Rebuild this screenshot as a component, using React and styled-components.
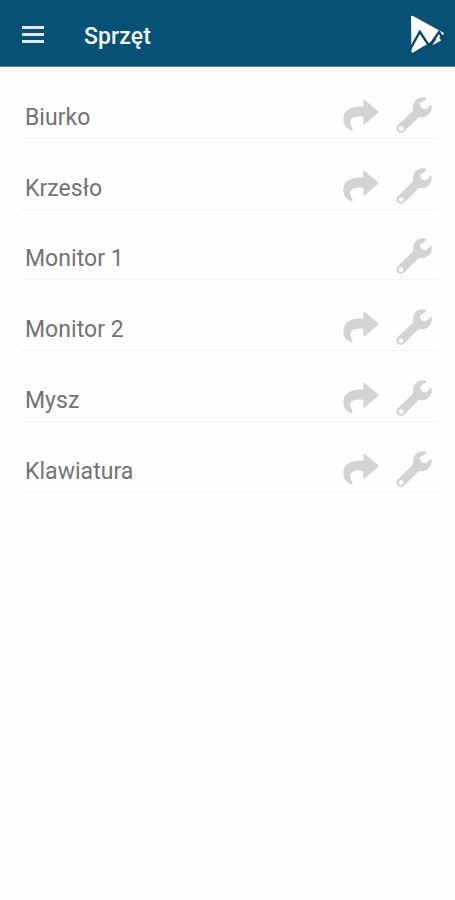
import React from "react";
import styled, { createGlobalStyle } from "styled-components";

const GlobalStyle = createGlobalStyle`
  body { margin: 0; background: #fefefe; font-family: Roboto, sans-serif; }
`;

const Screen = styled.main`
  min-height: 900px;
`;

const Header = styled.header`
  box-sizing: border-box;
  height: 67px;
  display: flex;
  align-items: center;
  padding: 2px 10px 0 22px;
  background: #075177;
  border-bottom: 1px solid #4d819c;
`;

const MenuButton = styled.button`
  display: flex;
  width: 22px;
  height: 17px;
  padding: 0;
  border: 0;
  background: none;
  flex-direction: column;
  justify-content: space-between;
`;

const MenuBar = styled.span`
  height: 3px;
  background: #d9e8f2;
`;

const Title = styled.h1`
  flex: 1;
  margin: 6px 0 0 40px;
  color: #f0f7fc;
  font-size: 23px;
  line-height: 28px;
  font-weight: 500;
  letter-spacing: 0.1px;
`;

const Logo = styled.svg`
  width: 36px;
  height: 40px;
`;

const List = styled.ul`
  list-style: none;
  margin: 0;
  padding: 1px 17px 0 20px;
`;

const Row = styled.li`
  box-sizing: border-box;
  height: 70.8px;
  display: flex;
  align-items: flex-end;
  justify-content: space-between;
  padding: 0 6px 5px 5px;
  border-bottom: 1px solid #f4f4f4;
`;

const Name = styled.span`
  color: #737373;
  font-size: 23px;
  line-height: 30px;
  letter-spacing: 0.04px;
`;

const Actions = styled.div`
  display: flex;
  align-items: center;
  gap: 17px;
  color: #d3d3d3;
`;

const Arrow = styled.svg`
  width: 36px;
  height: 32px;
  fill: currentColor;
`;

const Wrench = styled.svg`
  width: 36px;
  height: 36px;
  fill: currentColor;
`;

const items = [
  { name: "Biurko", share: true },
  { name: "Krzesło", share: true },
  { name: "Monitor 1", share: false },
  { name: "Monitor 2", share: true },
  { name: "Mysz", share: true },
  { name: "Klawiatura", share: true },
];

export default function App() {
  return (
    <Screen>
      <GlobalStyle />
      <Header>
        <MenuButton aria-label="Menu">
          <MenuBar />
          <MenuBar />
          <MenuBar />
        </MenuButton>
        <Title>Sprzęt</Title>
        <Logo viewBox="0 0 36 40">
          <path d="M2 3Q2 1 4 2L34 18.5Q36 19.5 34 20.7L5 38Q2 39.8 2.5 37Z" fill="#fff" />
          <path
            d="M1 35.5L10.8 17.8L20.2 32L30 18L34 24"
            fill="none"
            stroke="#074565"
            strokeWidth="2.3"
          />
          <path d="M23 31.5L29.7 22L32 26.5Z" fill="#fff" />
        </Logo>
      </Header>
      <List>
        {items.map(({ name, share }) => (
          <Row key={name}>
            <Name>{name}</Name>
            <Actions>
              {share && (
                <Arrow viewBox="0 0 108 96">
                  <path d="M61 4Q61 0 65 3L105 36Q108 39 105 42L65 76Q61 79 61 75V54C32 49 19 59 22 73Q24 82 29 89Q29 95 22 93C9 87 1 76 1 61C1 31 28 20 61 23Z" />
                </Arrow>
              )}
              <Wrench viewBox="0 0 106 106">
                <path
                  fillRule="evenodd"
                  d="M88 2C68-4 46 11 51 36L49 41L5 83C-5 94 5 107 16 106Q21 105 25 101L68 58C88 65 108 47 105 25Q103 21 100 25L88 37L75 33L70 20L87 8Q91 4 88 2ZM15 86A7 7 0 1 1 15 100A7 7 0 1 1 15 86Z"
                />
              </Wrench>
            </Actions>
          </Row>
        ))}
      </List>
    </Screen>
  );
}
